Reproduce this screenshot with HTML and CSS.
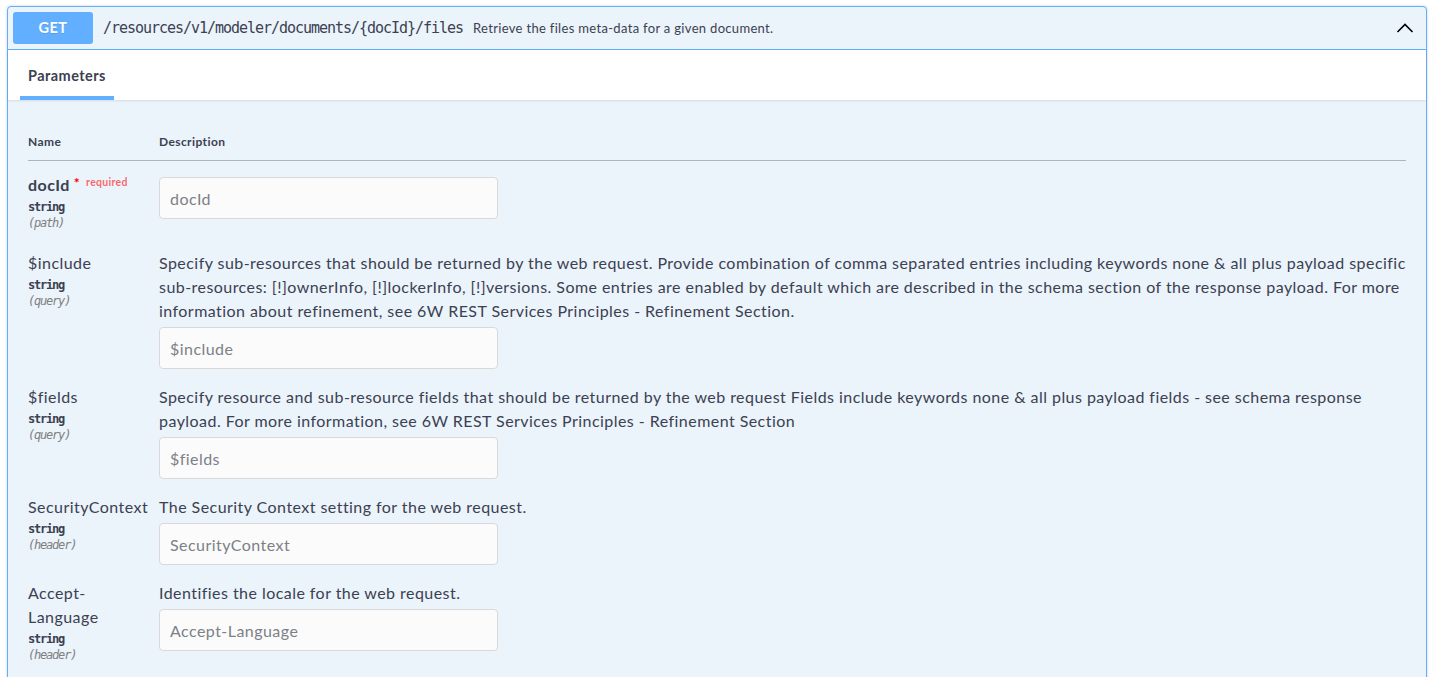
FILE: index.html
```html
<!DOCTYPE html>
<html>
<head>
<meta charset="utf-8">
<link rel="stylesheet" href="styles.css">
</head>
<body>
<div class="opblock">
  <div class="summary">
    <span class="method">GET</span>
    <span class="path">/resources/v1/modeler/documents/{docId}/files</span>
    <span class="summary-desc">Retrieve the files meta-data for a given document.</span>
    <svg class="chev" width="20" height="20" viewBox="0 0 20 20"><polyline points="2.5,14 10,6.5 17.5,14" fill="none" stroke="#000" stroke-width="1.6"/></svg>
  </div>
  <div class="section-header">
    <div class="tab">Parameters</div>
  </div>
  <div class="table-container">
    <div class="prow phead">
      <div class="col-name">Name</div>
      <div class="col-desc">Description</div>
    </div>

    <div class="prow">
      <div class="col-name">
        <div class="pname req">docId<span class="star">&nbsp;*</span><span class="reqlabel">required</span></div>
        <div class="ptype">string</div>
        <div class="pin">(path)</div>
      </div>
      <div class="col-desc">
        <input class="pinput" type="text" placeholder="docId">
      </div>
    </div>

    <div class="prow">
      <div class="col-name">
        <div class="pname">$include</div>
        <div class="ptype">string</div>
        <div class="pin">(query)</div>
      </div>
      <div class="col-desc">
        <p class="ptext">Specify sub-resources that should be returned by the web request. Provide combination of comma separated entries including keywords none &amp; all plus payload specific sub-resources: [!]ownerInfo, [!]lockerInfo, [!]versions. Some entries are enabled by default which are described in the schema section of the response payload. For more information about refinement, see 6W REST Services Principles - Refinement Section.</p>
        <input class="pinput" type="text" placeholder="$include">
      </div>
    </div>

    <div class="prow">
      <div class="col-name">
        <div class="pname">$fields</div>
        <div class="ptype">string</div>
        <div class="pin">(query)</div>
      </div>
      <div class="col-desc">
        <p class="ptext">Specify resource and sub-resource fields that should be returned by the web request Fields include keywords none &amp; all plus payload fields - see schema response payload. For more information, see 6W REST Services Principles - Refinement Section</p>
        <input class="pinput" type="text" placeholder="$fields">
      </div>
    </div>

    <div class="prow">
      <div class="col-name">
        <div class="pname">SecurityContext</div>
        <div class="ptype">string</div>
        <div class="pin">(header)</div>
      </div>
      <div class="col-desc">
        <p class="ptext">The Security Context setting for the web request.</p>
        <input class="pinput" type="text" placeholder="SecurityContext">
      </div>
    </div>

    <div class="prow">
      <div class="col-name">
        <div class="pname">Accept-Language</div>
        <div class="ptype">string</div>
        <div class="pin">(header)</div>
      </div>
      <div class="col-desc">
        <p class="ptext">Identifies the locale for the web request.</p>
        <input class="pinput" type="text" placeholder="Accept-Language">
      </div>
    </div>
  </div>
</div>
</body>
</html>
```

FILE: styles.css
```css
html, body {
  margin: 0;
  padding: 0;
  background: #fff;
  overflow: hidden;
}
body {
  font-family: Lato, "Liberation Sans", sans-serif;
  color: #3b4151;
}
.opblock {
  margin: 6px 8px 0 7px;
  border: 1px solid #61affe;
  border-radius: 4px;
  background: #ebf3fb;
  box-shadow: 0 0 3px rgba(0, 0, 0, 0.19);
}
.summary {
  display: flex;
  align-items: center;
  padding: 5px;
  border-bottom: 1px solid #61affe;
}
.method {
  width: 80px;
  height: 32px;
  line-height: 32px;
  text-align: center;
  background: #61affe;
  color: #fff;
  font-weight: 700;
  font-size: 14.5px;
  letter-spacing: 0.5px;
  border-radius: 3px;
  text-shadow: 0 1px 0 rgba(0, 0, 0, 0.1);
}
.path {
  margin-left: 10px;
  font-family: "DejaVu Sans Mono", monospace;
  font-size: 15px;
  letter-spacing: -1.03px;
  color: #3b4151;
}
.summary-desc {
  margin-left: 10px;
  font-size: 13px;
  letter-spacing: 0.32px;
  color: #3b4151;
}
.chev {
  margin-left: auto;
  margin-right: 6px;
}
.section-header {
  height: 50px;
  display: flex;
  align-items: center;
  padding: 0 20px;
  background: #fff;
  box-shadow: 0 1px 2px rgba(0, 0, 0, 0.1);
  position: relative;
}
.tab {
  position: relative;
  font-weight: 700;
  font-size: 14.5px;
  letter-spacing: 0.45px;
  line-height: 20px;
  padding-top: 1px;
}
.tab::after {
  content: "";
  position: absolute;
  left: -10%;
  width: 120%;
  bottom: -14.5px;
  height: 4px;
  background: #61affe;
}
.table-container {
  padding: 20px 20px 30px;
}
.prow {
  display: grid;
  grid-template-columns: 131px 1fr;
  align-items: start;
  padding: 12px 0 4px;
}
.phead {
  padding: 14px 0 10px;
  font-size: 12px;
  font-weight: 700;
  letter-spacing: 0.4px;
  line-height: 16px;
  border-bottom: 1px solid #aeb3bc;
}
.col-name {
  padding-right: 6px;
}
.prow .col-name {
  padding-bottom: 3px;
}
.phead .col-name {
  padding-bottom: 0;
}
.pname {
  font-size: 16px;
  line-height: 24px;
  letter-spacing: 0.45px;
}
.pname.req {
  font-weight: 700;
}
.star {
  color: red;
  font-size: 14px;
  line-height: 0;
  position: relative;
  top: -3px;
}
.reqlabel {
  color: rgba(255, 0, 0, 0.6);
  font-size: 10.5px;
  line-height: 0;
  letter-spacing: 0.3px;
  font-weight: 700;
  padding-left: 6px;
  position: relative;
  top: -5px;
}
.ptype {
  font-family: "DejaVu Sans Mono", monospace;
  font-size: 12px;
  letter-spacing: -1.2px;
  font-weight: 700;
  line-height: 16px;
  padding-top: 2px;
}
.pin {
  font-family: "DejaVu Sans Mono", monospace;
  font-size: 12px;
  letter-spacing: -1.2px;
  font-style: italic;
  color: #808080;
  line-height: 17px;
}
.ptext {
  margin: 0;
  font-size: 16px;
  line-height: 24px;
  letter-spacing: 0.45px;
}
.pinput {
  display: block;
  box-sizing: border-box;
  width: 339px;
  height: 42px;
  margin-top: 4px;
  padding: 8px 10px;
  border: 1px solid #d9d9d9;
  border-radius: 4px;
  background: #fbfbfb;
  font-family: Lato, "Liberation Sans", sans-serif;
  font-size: 16px;
  letter-spacing: 0.45px;
  color: #3b4151;
  outline: none;
}
.pinput::placeholder {
  color: #7d8087;
}
```
